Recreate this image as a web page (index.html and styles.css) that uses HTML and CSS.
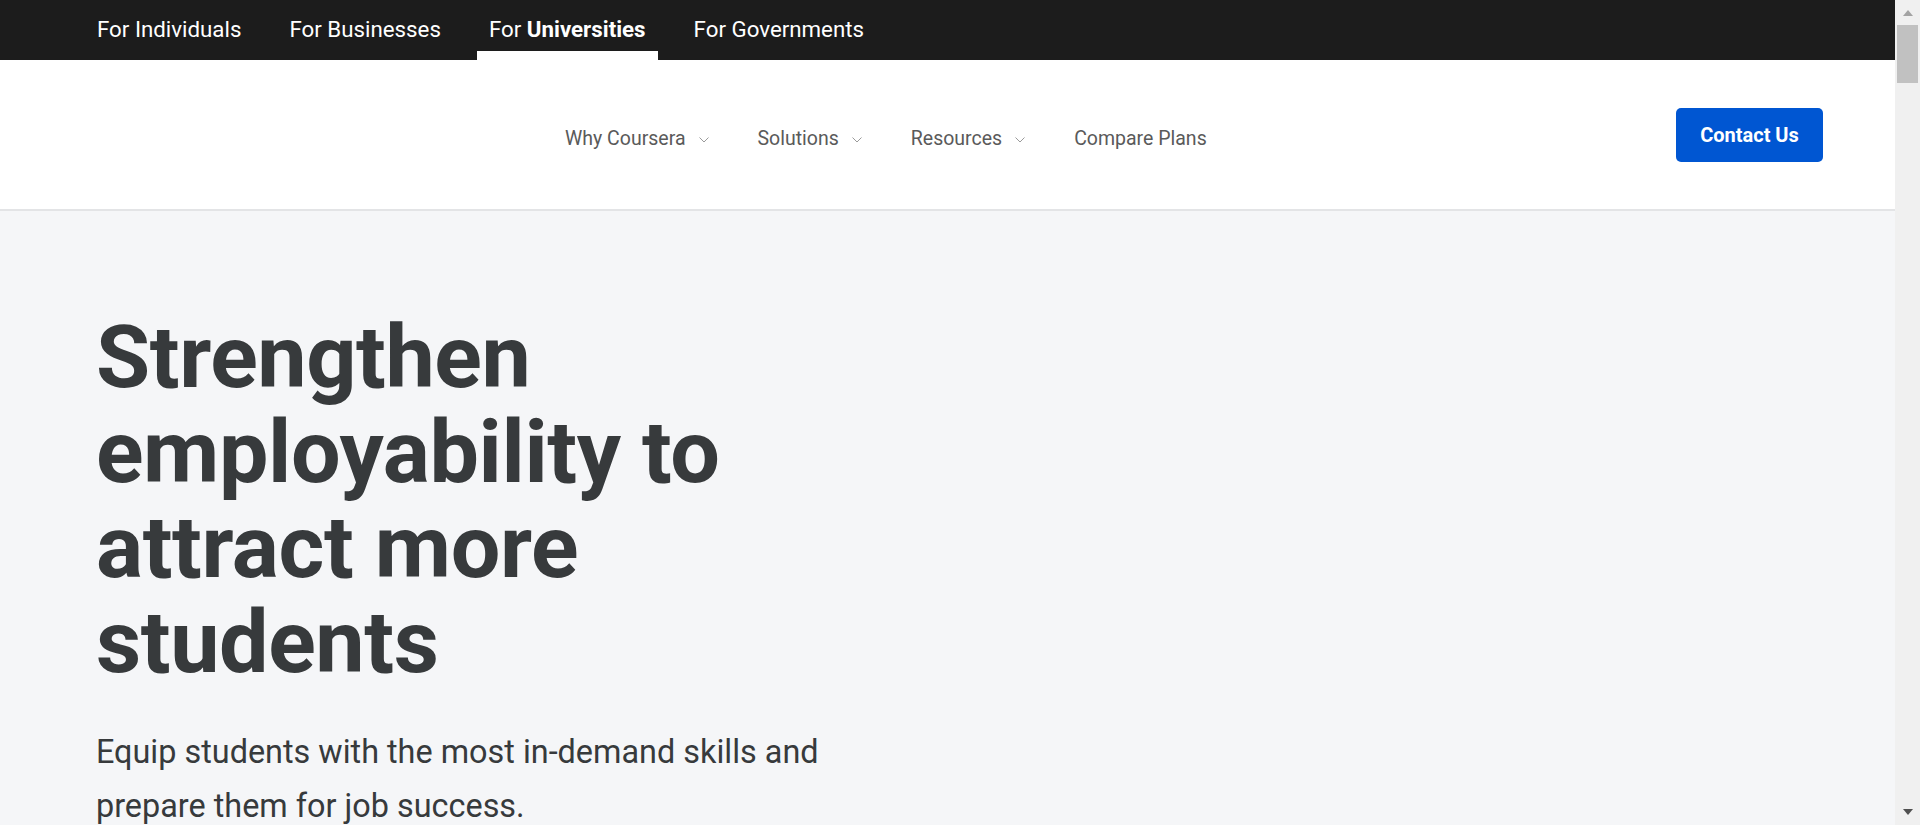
FILE: index.html
```html
<!DOCTYPE html>
<html lang="en">
<head>
<meta charset="utf-8">
<title>Coursera for Campus</title>
<link rel="stylesheet" href="styles.css">
</head>
<body>
  <div class="page">
    <div class="topbar">
      <a class="tab" href="#">For Individuals</a>
      <a class="tab" href="#">For Businesses</a>
      <a class="tab tab-active" href="#">For&nbsp;<b>Universities</b></a>
      <a class="tab" href="#">For Governments</a>
    </div>
    <header class="header">
      <nav class="nav">
        <a class="nav-item" href="#">Why Coursera
          <svg class="chev" width="10" height="6" viewBox="0 0 10 6"><path d="M0.5 0.5 L5 5 L9.5 0.5" fill="none" stroke="#9a9a9a" stroke-width="1"/></svg>
        </a>
        <a class="nav-item" href="#">Solutions
          <svg class="chev" width="10" height="6" viewBox="0 0 10 6"><path d="M0.5 0.5 L5 5 L9.5 0.5" fill="none" stroke="#9a9a9a" stroke-width="1"/></svg>
        </a>
        <a class="nav-item" href="#">Resources
          <svg class="chev" width="10" height="6" viewBox="0 0 10 6"><path d="M0.5 0.5 L5 5 L9.5 0.5" fill="none" stroke="#9a9a9a" stroke-width="1"/></svg>
        </a>
        <a class="nav-item" href="#">Compare Plans</a>
      </nav>
      <a class="contact" href="#">Contact Us</a>
    </header>
    <main class="hero">
      <h1 class="hero-title">Strengthen employability to attract more students</h1>
      <p class="hero-sub">Equip students with the most in-demand skills and prepare them for job success.</p>
    </main>
  </div>
  <div class="scrollbar" aria-hidden="true">
    <div class="sb-btn sb-up"><span class="tri-up"></span></div>
    <div class="sb-thumb"></div>
    <div class="sb-btn sb-down"><span class="tri-down"></span></div>
  </div>
</body>
</html>
```

FILE: styles.css
```css
body {
  margin: 0;
  display: flex;
  align-items: flex-start;
  font-family: Roboto, "Liberation Sans", sans-serif;
  background: #f5f6f8;
  color: #373a3c;
}

a {
  text-decoration: none;
  color: inherit;
}

.page {
  flex: 1;
  min-width: 0;
}

/* top audience bar */
.topbar {
  display: flex;
  height: 60px;
  padding-left: 85px;
  gap: 24px;
  background: #1c1c1c;
}
.tab {
  display: flex;
  align-items: center;
  padding: 0 12px 2px;
  color: #ffffff;
  font-size: 22.3px;
}
.tab b {
  font-weight: 700;
}
.tab-active {
  box-shadow: inset 0 -9px 0 #ffffff;
}

/* main header */
.header {
  display: flex;
  align-items: center;
  height: 149px;
  padding: 0 72px 0 96px;
  background: #ffffff;
  border-bottom: 2px solid #e3e4e6;
}
.nav {
  display: flex;
  align-items: center;
  gap: 49px;
  margin-left: 469px;
  padding-top: 8px;
}
.nav-item {
  display: flex;
  align-items: center;
  gap: 13px;
  font-size: 19.5px;
  color: #5a5a5a;
}
.chev {
  display: block;
  margin-top: 3px;
}
.contact {
  margin-left: auto;
  display: flex;
  align-items: center;
  justify-content: center;
  width: 147px;
  height: 54px;
  border-radius: 5px;
  background: #0056d2;
  color: #ffffff;
  font-size: 20px;
  font-weight: 700;
}

/* hero */
.hero {
  min-height: 1400px;
  padding: 0 96px;
}
.hero-title {
  margin: 0;
  padding-top: 98px;
  max-width: 690px;
  font-size: 88px;
  line-height: 95px;
  font-weight: 700;
  letter-spacing: -0.4px;
  color: #373a3c;
}
.hero-sub {
  margin: 36px 0 0;
  max-width: 760px;
  font-size: 32.4px;
  line-height: 54px;
  color: #373a3c;
}

/* browser scrollbar */
.scrollbar {
  flex: 0 0 25px;
  height: 100vh;
  display: flex;
  flex-direction: column;
  background: #f0f0f0;
}
.sb-btn {
  height: 25px;
  display: flex;
  justify-content: center;
}
.sb-up {
  padding-top: 10px;
  box-sizing: border-box;
}
.sb-down {
  margin-top: auto;
  padding-top: 9px;
  box-sizing: border-box;
}
.tri-up {
  width: 0;
  height: 0;
  border-left: 5.5px solid transparent;
  border-right: 5.5px solid transparent;
  border-bottom: 6px solid #a3a3a3;
}
.tri-down {
  width: 0;
  height: 0;
  border-left: 5.5px solid transparent;
  border-right: 5.5px solid transparent;
  border-top: 6px solid #505050;
}
.sb-thumb {
  height: 58px;
  margin: 0 2px;
  background: #c1c1c1;
}
```
